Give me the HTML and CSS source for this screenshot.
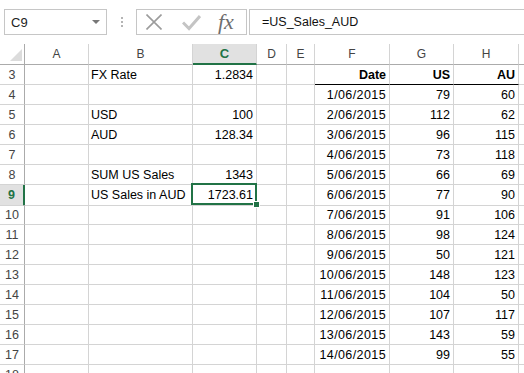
FILE: index.html
```html
<!DOCTYPE html>
<html>
<head>
  <meta charset="UTF-8">
  <title>FX Rate sheet</title>
  <link rel="stylesheet" href="styles.css">
</head>
<body>
  <div class="toolbar">
    <div class="namebox"><span>C9</span><span class="caret"></span></div>
    <div class="grip"><i></i><i></i><i></i></div>
    <div class="fxbox">
      <svg class="ico-x" width="16" height="16" viewBox="0 0 16 16"><path d="M0.5 0.5L15.5 15.5M15.5 0.5L0.5 15.5" stroke="#9c9c9c" stroke-width="1.6" fill="none"/></svg>
      <svg class="ico-ok" width="19" height="17" viewBox="0 0 19 17"><path d="M1 8.5L7 14.5L18 2" stroke="#c4c4c4" stroke-width="3" fill="none"/></svg>
      <span class="fx">fx</span>
    </div>
    <div class="formula">=US_Sales_AUD</div>
  </div>

  <div class="sheet">
    <div class="row hdr">
      <div class="c corner"><span class="tri"></span></div>
      <div class="c ch">A</div><div class="c ch">B</div><div class="c ch sel">C</div><div class="c ch">D</div>
      <div class="c ch">E</div><div class="c ch">F</div><div class="c ch">G</div><div class="c ch">H</div><div class="c ch"></div>
    </div>
    <div class="row">
      <div class="c rh">3</div><div class="c"></div><div class="c">FX Rate</div><div class="c r">1.2834</div><div class="c"></div>
      <div class="c"></div><div class="c r hd">Date</div><div class="c r hd">US</div><div class="c r hd">AU</div><div class="c"></div>
    </div>
    <div class="row">
      <div class="c rh">4</div><div class="c"></div><div class="c"></div><div class="c"></div><div class="c"></div>
      <div class="c"></div><div class="c r dt">1/06/2015</div><div class="c r">79</div><div class="c r">60</div><div class="c"></div>
    </div>
    <div class="row">
      <div class="c rh">5</div><div class="c"></div><div class="c">USD</div><div class="c r">100</div><div class="c"></div>
      <div class="c"></div><div class="c r dt">2/06/2015</div><div class="c r">112</div><div class="c r">62</div><div class="c"></div>
    </div>
    <div class="row">
      <div class="c rh">6</div><div class="c"></div><div class="c">AUD</div><div class="c r">128.34</div><div class="c"></div>
      <div class="c"></div><div class="c r dt">3/06/2015</div><div class="c r">96</div><div class="c r">115</div><div class="c"></div>
    </div>
    <div class="row">
      <div class="c rh">7</div><div class="c"></div><div class="c"></div><div class="c"></div><div class="c"></div>
      <div class="c"></div><div class="c r dt">4/06/2015</div><div class="c r">73</div><div class="c r">118</div><div class="c"></div>
    </div>
    <div class="row">
      <div class="c rh">8</div><div class="c"></div><div class="c">SUM US Sales</div><div class="c r">1343</div><div class="c"></div>
      <div class="c"></div><div class="c r dt">5/06/2015</div><div class="c r">66</div><div class="c r">69</div><div class="c"></div>
    </div>
    <div class="row">
      <div class="c rh sel">9</div><div class="c"></div><div class="c">US Sales in AUD</div><div class="c r active">1723.61<span class="cursor"></span></div><div class="c"></div>
      <div class="c"></div><div class="c r dt">6/06/2015</div><div class="c r">77</div><div class="c r">90</div><div class="c"></div>
    </div>
    <div class="row">
      <div class="c rh">10</div><div class="c"></div><div class="c"></div><div class="c"></div><div class="c"></div>
      <div class="c"></div><div class="c r dt">7/06/2015</div><div class="c r">91</div><div class="c r">106</div><div class="c"></div>
    </div>
    <div class="row">
      <div class="c rh">11</div><div class="c"></div><div class="c"></div><div class="c"></div><div class="c"></div>
      <div class="c"></div><div class="c r dt">8/06/2015</div><div class="c r">98</div><div class="c r">124</div><div class="c"></div>
    </div>
    <div class="row">
      <div class="c rh">12</div><div class="c"></div><div class="c"></div><div class="c"></div><div class="c"></div>
      <div class="c"></div><div class="c r dt">9/06/2015</div><div class="c r">50</div><div class="c r">121</div><div class="c"></div>
    </div>
    <div class="row">
      <div class="c rh">13</div><div class="c"></div><div class="c"></div><div class="c"></div><div class="c"></div>
      <div class="c"></div><div class="c r dt">10/06/2015</div><div class="c r">148</div><div class="c r">123</div><div class="c"></div>
    </div>
    <div class="row">
      <div class="c rh">14</div><div class="c"></div><div class="c"></div><div class="c"></div><div class="c"></div>
      <div class="c"></div><div class="c r dt">11/06/2015</div><div class="c r">104</div><div class="c r">50</div><div class="c"></div>
    </div>
    <div class="row">
      <div class="c rh">15</div><div class="c"></div><div class="c"></div><div class="c"></div><div class="c"></div>
      <div class="c"></div><div class="c r dt">12/06/2015</div><div class="c r">107</div><div class="c r">117</div><div class="c"></div>
    </div>
    <div class="row">
      <div class="c rh">16</div><div class="c"></div><div class="c"></div><div class="c"></div><div class="c"></div>
      <div class="c"></div><div class="c r dt">13/06/2015</div><div class="c r">143</div><div class="c r">59</div><div class="c"></div>
    </div>
    <div class="row">
      <div class="c rh">17</div><div class="c"></div><div class="c"></div><div class="c"></div><div class="c"></div>
      <div class="c"></div><div class="c r dt">14/06/2015</div><div class="c r">99</div><div class="c r">55</div><div class="c"></div>
    </div>
    <div class="row">
      <div class="c rh">18</div><div class="c"></div><div class="c"></div><div class="c"></div><div class="c"></div>
      <div class="c"></div><div class="c"></div><div class="c"></div><div class="c"></div><div class="c"></div>
    </div>
  </div>
</body>
</html>
```
FILE: styles.css
```css
body { margin: 0; width: 524px; height: 373px; overflow: hidden; background: #fff; font-family: "Liberation Sans", Arial, sans-serif; color: #000; }

/* formula bar */
.toolbar { display: flex; align-items: flex-start; height: 44px; box-sizing: border-box; padding: 9px 0 0 4px; }
.namebox { width: 103px; height: 26px; box-sizing: border-box; border: 1px solid #c6c6c6; display: flex; align-items: center; justify-content: space-between; padding: 0 6px; font-size: 13px; color: #222; }
.caret { width: 0; height: 0; border-left: 4px solid transparent; border-right: 4px solid transparent; border-top: 4px solid #777; }
.grip { width: 29px; height: 26px; display: flex; flex-direction: column; align-items: center; justify-content: center; gap: 2px; }
.grip i { width: 2px; height: 2px; background: #b4b4b4; }
.fxbox { width: 111px; height: 26px; box-sizing: border-box; border: 1px solid #c6c6c6; display: flex; align-items: center; }
.ico-x { margin-left: 9px; }
.ico-ok { margin-left: 20px; }
.fx { margin-left: 17px; font-family: "Liberation Serif", "Times New Roman", serif; font-style: italic; font-size: 22px; line-height: 24px; color: #6e6e6e; }
.formula { flex: 1; min-width: 0; height: 26px; box-sizing: border-box; margin-left: 2px; border: 1px solid #c6c6c6; border-right: none; padding-left: 12px; font-size: 12.5px; line-height: 24px; color: #111; white-space: nowrap; }

/* grid */
.sheet { width: 524px; overflow: hidden; }
.row { display: grid; grid-template-columns: 25px 64px 104px 64px 30px 28px 75px 64px 65px 1fr; height: 20px; }
.c { box-sizing: border-box; border-right: 1px solid #d4d4d4; border-bottom: 1px solid #d4d4d4; padding: 1px 2px 0; font-size: 12.5px; line-height: 19px; white-space: nowrap; overflow: hidden; }
.row .c:last-child { border-right: none; }
.r { text-align: right; padding-right: 3px; }
.dt { letter-spacing: 0.4px; }
.hd { font-weight: bold; border-bottom-color: #000; }

.hdr { height: 21px; }
.ch { text-align: center; color: #444; font-size: 12px; line-height: 18px; border-bottom-color: #ababab; }
.ch.sel { background: #e1e1e1; color: #217346; font-weight: bold; font-size: 13px; border-bottom: 2px solid #217346; }
.corner { display: flex; justify-content: flex-end; align-items: flex-end; padding: 0 2px 3px 0; border-bottom-color: #ababab; border-right-color: #ababab; }
.tri { width: 0; height: 0; border-left: 12px solid transparent; border-bottom: 12px solid #dcdcdc; }

.rh { text-align: center; color: #444; padding: 1px 0 0; border-right-color: #ababab; }
.rh.sel { background: #e1e1e1; color: #217346; font-weight: bold; border-right: 2px solid #217346; }

.active { position: relative; overflow: visible; }
.cursor { position: absolute; left: -2px; top: -2px; width: 66px; height: 22px; box-sizing: border-box; border: 2px solid #217346; }
.cursor::after { content: ""; position: absolute; left: 60px; top: 16px; width: 5px; height: 5px; background: #217346; border: 1px solid #fff; }
```
